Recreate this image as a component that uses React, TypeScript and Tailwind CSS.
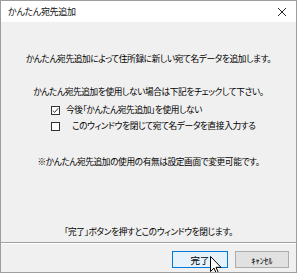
import React from "react";

const font = { fontFamily: '"Noto Sans CJK JP", "Noto Sans", sans-serif', fontFeatureSettings: '"palt"' } as React.CSSProperties;

function Check({ checked }: { checked?: boolean }) {
  return (
    <div className="w-[9px] h-[9px] border border-[#333333] bg-white flex items-center justify-center shrink-0">
      {checked && (
        <svg width="7" height="7" viewBox="0 0 7 7">
          <path d="M0.8 3.6 L2.7 5.4 L6.2 1.2" fill="none" stroke="#333" strokeWidth="1" />
        </svg>
      )}
    </div>
  );
}

export default function App() {
  return (
    <div className="relative w-[297px] h-[273px] border border-[#9d9d9d] flex flex-col text-[#000] overflow-hidden" style={font}>
      <div className="h-[21px] bg-white flex items-center justify-between pl-[7px] pr-[9px] shrink-0">
        <span className="text-[9px] tracking-[-0.3px] leading-none text-[#111]">かんたん宛先追加</span>
        <svg width="10" height="10" viewBox="0 0 10 10">
          <path d="M1 1 L9 9 M9 1 L1 9" stroke="#222" strokeWidth="1" />
        </svg>
      </div>
      <div className="flex-1 bg-[#f0f0f0] flex flex-col text-[8.7px] tracking-[-0.4px] leading-[12px]">
        <div className="mt-[31px] h-[12px] text-center">かんたん宛先追加によって住所録に新しい宛て名データを追加します。</div>
        <div className="mt-[21px] h-[12px] text-center">かんたん宛先追加を使用しない場合は下記をチェックして下さい。</div>
        <div className="mt-[6px] h-[12px] flex items-center pl-[50px] gap-[6px]">
          <Check checked />
          <span>今後「かんたん宛先追加」を使用しない</span>
        </div>
        <div className="mt-[4px] h-[12px] flex items-center pl-[50px] gap-[6px]">
          <Check />
          <span className="pl-[6px]">このウィンドウを閉じて宛て名データを直接入力する</span>
        </div>
        <div className="mt-[24px] h-[12px] text-center">※かんたん宛先追加の使用の有無は設定画面で変更可能です。</div>
        <div className="mt-[58px] h-[12px] text-center">「完了」ボタンを押すとこのウィンドウを閉じます。</div>
        <div className="mt-[4px] mx-0 h-[2px] flex flex-col">
          <div className="h-[1px] bg-[#a0a0a0]" />
          <div className="h-[1px] bg-white" />
        </div>
        <div className="mt-[7px] flex justify-end gap-[7px] pr-[7px]">
          <div className="w-[56px] h-[17px] border border-[#0078d7] bg-[#e5f1fb] flex items-center justify-center text-[9.5px] tracking-normal">完了</div>
          <div className="w-[54px] h-[17px] border border-[#adadad] bg-[#e1e1e1] flex items-center justify-center text-[8.5px] tracking-normal">ｷｬﾝｾﾙ</div>
        </div>
      </div>
      <svg className="absolute left-[209px] top-[255px]" width="12" height="19" viewBox="0 0 12 19">
        <path d="M0.5 0.5 L0.5 15.5 L4 12 L6.5 17.8 L8.5 17 L6 11.3 L11 11.3 Z" fill="#fff" stroke="#000" strokeWidth="1" strokeLinejoin="round" />
      </svg>
    </div>
  );
}
